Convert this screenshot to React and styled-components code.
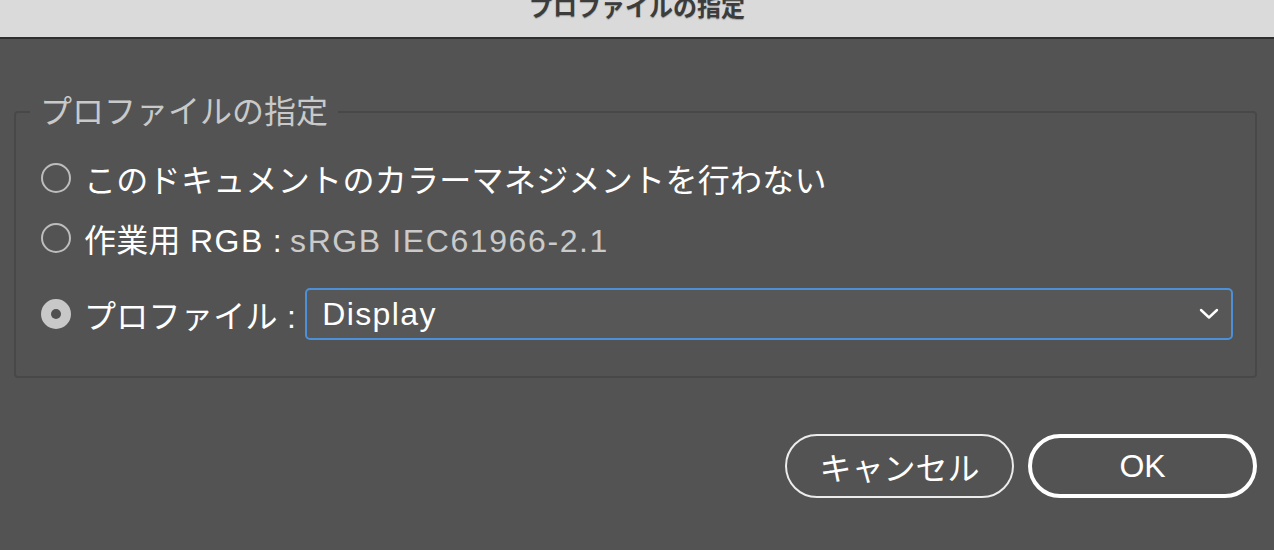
import React from "react";
import styled, { createGlobalStyle } from "styled-components";

const Global = createGlobalStyle`
  html, body { margin: 0; padding: 0; }
  body {
    background: #535353;
    font-family: "Liberation Sans", "Noto Sans CJK JP", sans-serif;
    width: 1274px;
    height: 550px;
    overflow: hidden;
  }
`;

const Window = styled.div`
  width: 1274px;
  height: 550px;
  display: flex;
  flex-direction: column;
  background: #535353;
`;

const TitleBar = styled.div`
  height: 37px;
  background: #dadada;
  border-bottom: 2px solid #2e2e2e;
  display: flex;
  justify-content: center;
  align-items: flex-start;
  overflow: hidden;
`;

const Title = styled.div`
  font-size: 24px;
  line-height: 24px;
  font-weight: 700;
  color: #3c3c3c;
  margin-top: -4px;
  text-shadow: 0 1px 1px rgba(0, 0, 0, 0.25);
`;

const Body = styled.div`
  display: flex;
  flex-direction: column;
  padding: 0 17px 0 14px;
`;

const Group = styled.fieldset`
  margin: 54px 0 0 0;
  padding: 27px 22px 36px 25px;
  border: 2px solid #484848;
  border-radius: 4px;
  display: flex;
  flex-direction: column;
  min-width: 0;
`;

const Legend = styled.legend`
  font-size: 32px;
  line-height: 38px;
  color: #c9c9c9;
  padding: 0 10px;
  margin-left: -11px;
`;

const Row = styled.label`
  display: flex;
  align-items: center;
  height: ${(p) => p.$h || 40}px;
  margin-top: ${(p) => p.$mt || 0}px;
  gap: 13px;
  color: #ffffff;
  font-size: 32px;
  white-space: nowrap;
`;

const Radio = styled.span`
  box-sizing: border-box;
  flex: none;
  width: 30px;
  height: 30px;
  border-radius: 50%;
  border: 2px solid ${(p) => (p.$checked ? "#c8c8c8" : "#bdbdbd")};
  background: ${(p) => (p.$checked ? "#c8c8c8" : "transparent")};
  display: flex;
  align-items: center;
  justify-content: center;
  &::after {
    content: "";
    display: ${(p) => (p.$checked ? "block" : "none")};
    width: 10px;
    height: 10px;
    border-radius: 50%;
    background: #4f4f4f;
  }
`;

const Label = styled.span`
  color: #ffffff;
  letter-spacing: 0.3px;
`;

const Latin = styled.span`
  letter-spacing: 1.4px;
`;

const Value = styled.span`
  color: #cacaca;
  margin-left: 8px;
  letter-spacing: 1.6px;
`;

const Select = styled.div`
  box-sizing: border-box;
  flex: 1;
  height: 52px;
  margin-left: -4px;
  border: 2px solid #4c90d8;
  border-radius: 5px;
  background: #575757;
  display: flex;
  align-items: center;
  justify-content: space-between;
  padding: 0 12px 0 15px;
  color: #ffffff;
  font-size: 32px;
`;

const Buttons = styled.div`
  display: flex;
  justify-content: flex-end;
  gap: 14px;
  margin-top: 56px;
`;

const Button = styled.button`
  box-sizing: border-box;
  width: 229px;
  height: 64px;
  border-radius: 32px;
  background: transparent;
  border: ${(p) => (p.$primary ? "4px solid #ffffff" : "2px solid #ececec")};
  color: #ffffff;
  font-family: "Liberation Sans", "Noto Sans CJK JP", sans-serif;
  font-size: 32px;
  padding: 0;
  display: flex;
  align-items: center;
  justify-content: center;
`;

function Chevron() {
  return (
    <svg width="20" height="12" viewBox="0 0 20 12">
      <polyline
        points="2,2 10,9.5 18,2"
        fill="none"
        stroke="#ffffff"
        strokeWidth="2.4"
        strokeLinecap="round"
        strokeLinejoin="round"
      />
    </svg>
  );
}

export default function App() {
  return (
    <Window>
      <Global />
      <TitleBar>
        <Title>プロファイルの指定</Title>
      </TitleBar>
      <Body>
        <Group>
          <Legend>プロファイルの指定</Legend>
          <Row>
            <Radio />
            <Label>このドキュメントのカラーマネジメントを行わない</Label>
          </Row>
          <Row $mt={20}>
            <Radio />
            <Label>
              作業用 <Latin>RGB</Latin> :<Value>sRGB IEC61966-2.1</Value>
            </Label>
          </Row>
          <Row $mt={30} $h={52}>
            <Radio $checked />
            <Label>プロファイル :</Label>
            <Select>
              <Latin>Display</Latin>
              <Chevron />
            </Select>
          </Row>
        </Group>
        <Buttons>
          <Button>キャンセル</Button>
          <Button $primary>OK</Button>
        </Buttons>
      </Body>
    </Window>
  );
}
